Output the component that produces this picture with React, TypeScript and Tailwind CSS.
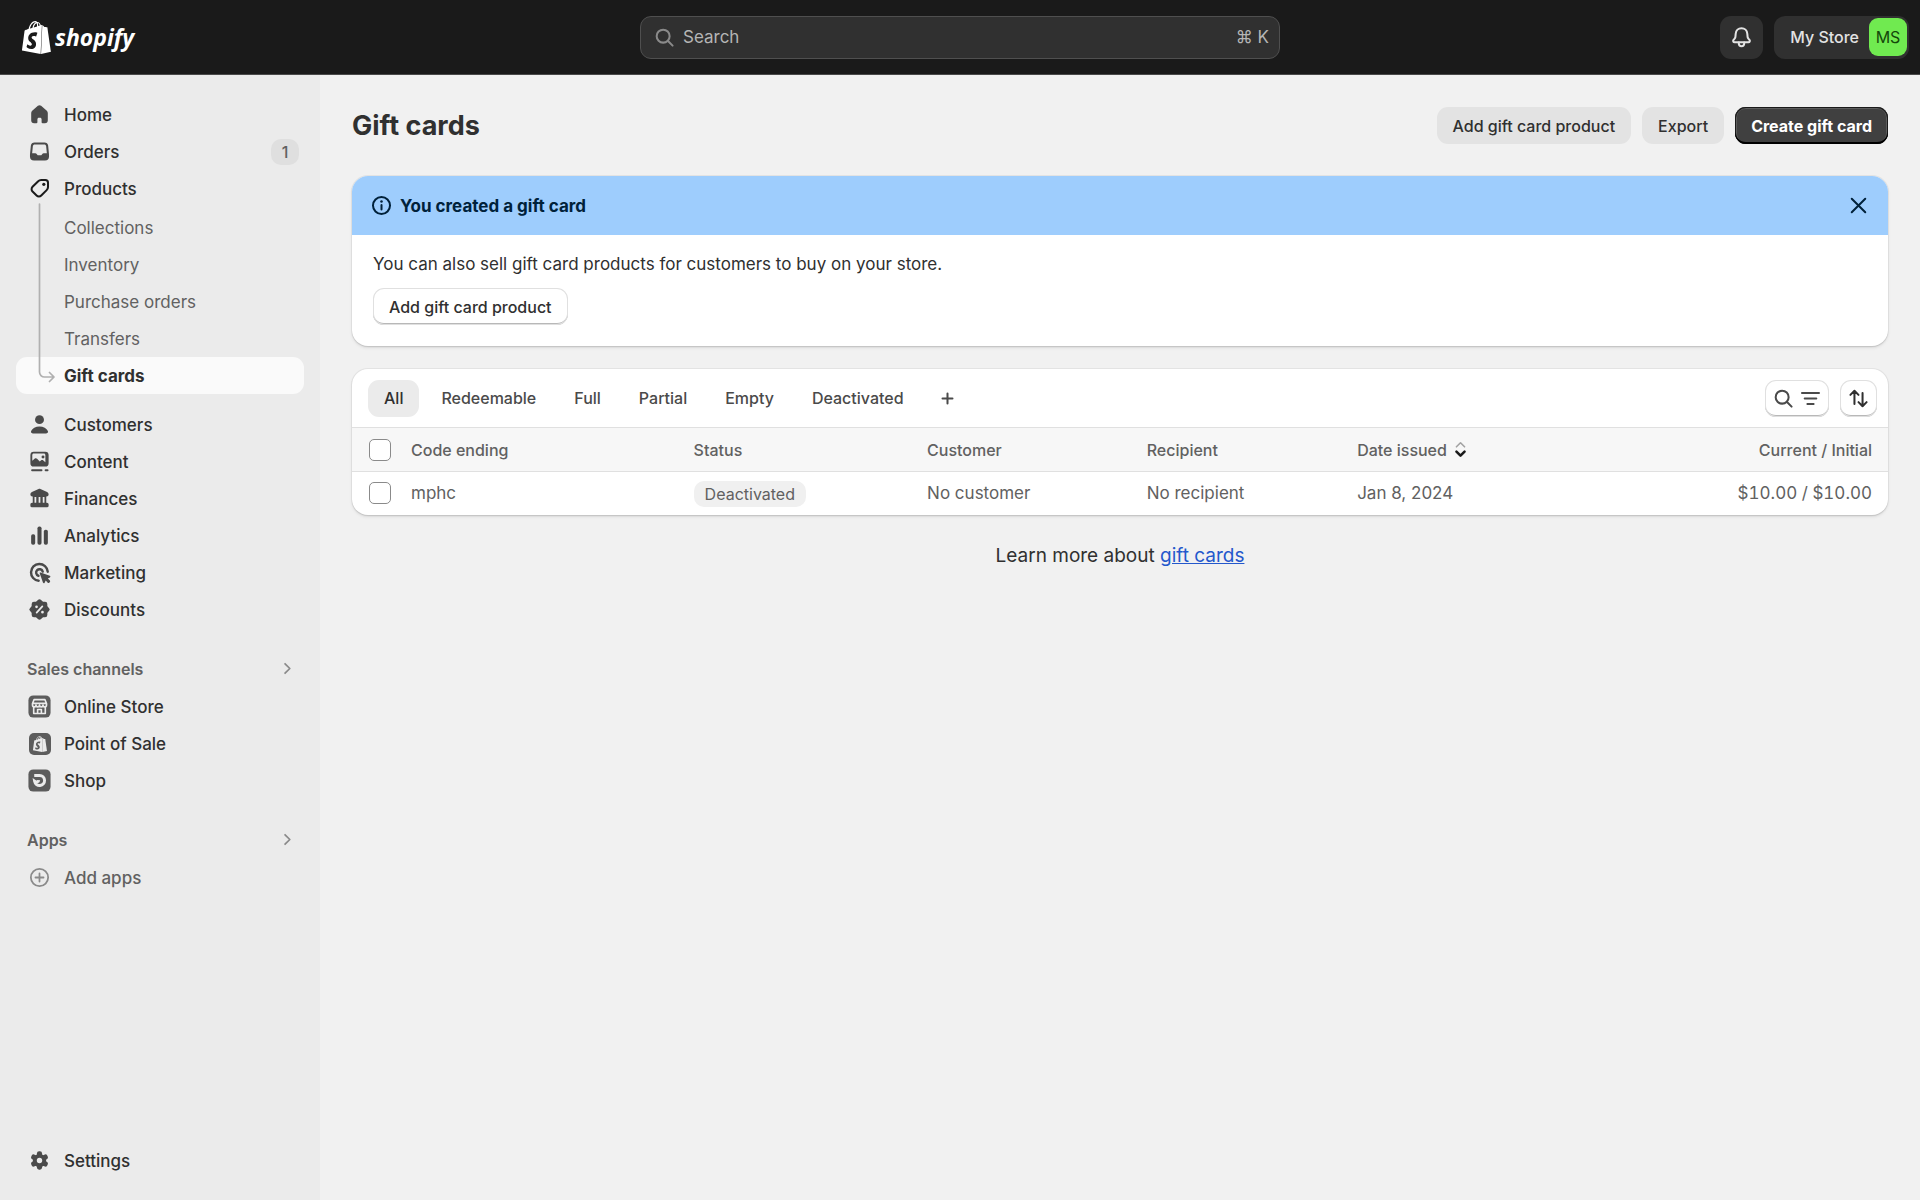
import * as React from 'react';
import { SiShopify } from 'react-icons/si';

type IconProps = { className?: string };

const Svg: React.FC<React.PropsWithChildren<IconProps>> = ({ className = '', children }) => (
  <svg viewBox="0 0 20 20" fill="currentColor" aria-hidden="true" className={`size-[27px] shrink-0 ${className}`}>
    {children}
  </svg>
);

const stroke = {
  fill: 'none',
  stroke: 'currentColor',
  strokeWidth: 1.5,
  strokeLinecap: 'round',
  strokeLinejoin: 'round',
} as const;

const HomeIcon = () => (
  <Svg>
    <path d="M8.8 3.6a1.8 1.8 0 0 1 2.4 0l4 3.5c.6.5.95 1.2.95 2v5.2a2.2 2.2 0 0 1-2.2 2.2h-1.6a.8.8 0 0 1-.8-.8v-2.2c0-.6-.5-1.1-1.1-1.1h-.9c-.6 0-1.1.5-1.1 1.1v2.2a.8.8 0 0 1-.8.8h-1.6a2.2 2.2 0 0 1-2.2-2.2v-5.2c0-.8.35-1.5.95-2z" />
  </Svg>
);

const OrdersIcon = () => (
  <Svg>
    <path
      fillRule="evenodd"
      d="M6.3 3.25h7.4a2.75 2.75 0 0 1 2.7 2.3l.6 6.2c.05.3.05.6.05.9v1.1a3 3 0 0 1-3 3h-8.1a3 3 0 0 1-3-3v-1.1c0-.3 0-.6.05-.9l.6-6.2a2.75 2.75 0 0 1 2.7-2.3zm.1 1.5c-.65 0-1.2.45-1.3 1.1l-.55 5.4h2.3c.5 0 .95.3 1.2.7l.3.5c.15.3.45.4.7.4h1.9c.3 0 .55-.15.7-.4l.3-.5c.25-.4.7-.7 1.2-.7h2.3l-.55-5.4c-.1-.65-.65-1.1-1.3-1.1z"
    />
  </Svg>
);

const ProductsIcon = () => (
  <Svg className="text-[#1a1a1a]">
    <path
      {...stroke}
      d="M11.2 3.7h3.1c1.1 0 2 .9 2 2v3.1c0 .9-.35 1.75-1 2.4l-4 4c-.95.95-2.5.95-3.45 0l-3-3c-.95-.95-.95-2.5 0-3.45l4-4c.65-.65 1.5-1.05 2.35-1.05z"
    />
    <circle cx="13.2" cy="6.9" r="1.2" />
  </Svg>
);

const CustomersIcon = () => (
  <Svg>
    <circle cx="10" cy="6.4" r="3.3" />
    <path d="M3.8 14.9c.9-2.2 3.3-3.5 6.2-3.5s5.3 1.3 6.2 3.5c.4 1-.3 1.7-1.2 1.7h-10c-.9 0-1.6-.7-1.2-1.7z" />
  </Svg>
);

const ContentIcon = () => (
  <Svg>
    <path
      fillRule="evenodd"
      d="M5.75 2.75h8.5a2.5 2.5 0 0 1 2.5 2.5v6a2.5 2.5 0 0 1-2.5 2.5h-8.5a2.5 2.5 0 0 1-2.5-2.5v-6a2.5 2.5 0 0 1 2.5-2.5zm0 1.4c-.6 0-1.1.5-1.1 1.1v4.2l1.9-1.6c.5-.4 1.2-.4 1.65.1l2 2.1 1-.9c.5-.4 1.2-.4 1.65.05l1.5 1.3v-5.25c0-.6-.5-1.1-1.1-1.1zM12.6 5.5a1.1 1.1 0 1 1 0 2.2a1.1 1.1 0 0 1 0-2.2z"
    />
    <path {...stroke} strokeWidth={1.4} d="M4.5 16.5h7M14.5 16.5h1.5" />
  </Svg>
);

const FinancesIcon = () => (
  <Svg>
    <path
      fillRule="evenodd"
      d="M9.3 2.95c.45-.2.95-.2 1.4 0l4.9 2.3c.7.35 1.15 1 1.15 1.75 0 .85-.7 1.5-1.5 1.5h-.25v4.6h.5c.7 0 1.25.55 1.25 1.25v1.15c0 .5-.4.9-.9.9h-11.7c-.5 0-.9-.4-.9-.9v-1.15c0-.7.55-1.25 1.25-1.25h.5v-4.6h-.25c-.8 0-1.5-.65-1.5-1.5 0-.75.45-1.4 1.15-1.75zM6.3 8.9v4.2h1.3v-4.2zM9.35 8.9v4.2h1.3v-4.2zM12.4 8.9v4.2h1.3v-4.2z"
    />
  </Svg>
);

const AnalyticsIcon = () => (
  <Svg>
    <rect x="3.8" y="9" width="3" height="7.8" rx="1.3" />
    <rect x="8.5" y="3.4" width="3" height="13.4" rx="1.3" />
    <rect x="13.2" y="5.8" width="3" height="11" rx="1.3" />
  </Svg>
);

const MarketingIcon = () => (
  <Svg>
    <path {...stroke} strokeWidth={1.8} d="M16.1 9.4a6.2 6.2 0 1 0-6.7 6.7" />
    <path {...stroke} strokeWidth={1.8} d="M12.4 9.3a2.5 2.5 0 1 0-3.2 3.1" />
    <path d="M10.8 10l6.8 2.4c.6.2.6 1 .1 1.25l-1.5.75 1.5 1.5c.3.3.3.8 0 1.1l-.5.5c-.3.3-.8.3-1.1 0l-1.5-1.5-.8 1.5c-.25.55-1 .5-1.25-.1l-2.4-6.8c-.15-.4.25-.8.65-.6z" />
  </Svg>
);

const DiscountsIcon = () => (
  <Svg>
    <rect x="4.2" y="4.2" width="11.6" height="11.6" rx="1.7" />
    <rect x="4.2" y="4.2" width="11.6" height="11.6" rx="1.7" transform="rotate(45 10 10)" />
    <g fill="#ebebeb" stroke="#ebebeb">
      <path d="M7.900 12.300l4.200-4.600" strokeWidth="1.3" strokeLinecap="round" />
      <circle cx="7.8" cy="8" r="0.5" />
      <circle cx="12.2" cy="12" r="0.5" />
    </g>
  </Svg>
);

const StoreChannelIcon = () => (
  <Svg className="text-[#5c5c5c]">
    <rect x="1.8" y="1.8" width="16.4" height="16.4" rx="3.6" />
    <g fill="none" stroke="#ebebeb" strokeWidth="1.2" strokeLinejoin="round">
      <path d="M6 4.9h8l1.2 2.9v1.1c0 .8-.6 1.4-1.3 1.4s-1.3-.6-1.3-1.4c0 .8-.6 1.4-1.3 1.4s-1.3-.6-1.3-1.4c0 .8-.6 1.4-1.3 1.4s-1.3-.6-1.3-1.4c0 .8-.6 1.4-1.3 1.4s-1.3-.6-1.3-1.4v-1.1zM4.8 7.7h10.4" />
      <path d="M5.7 10.3v4.9h8.6v-4.9M8.6 15v-2.8h2.8v2.8" />
    </g>
  </Svg>
);

const PosChannelIcon = () => (
  <span className="grid size-[27px] shrink-0 place-items-center">
    <span className="grid size-[22px] place-items-center rounded-[5px] bg-[#5c5c5c]">
      <SiShopify className="size-4 text-[#ebebeb]" aria-hidden="true" />
    </span>
  </span>
);

const ShopChannelIcon = () => (
  <Svg className="text-[#5c5c5c]">
    <rect x="1.8" y="1.8" width="16.4" height="16.4" rx="3.6" />
    <path d="M6.1 6.3h4a3.7 3.7 0 1 1-3.7 4.3c1.3.9 2.9.5 3-.8" fill="none" stroke="#ebebeb" strokeWidth="2.2" />
  </Svg>
);

const PlusCircleIcon = () => (
  <Svg className="text-[#8a8a8a]">
    <g {...stroke} strokeWidth={1.3}>
      <circle cx="10" cy="10" r="6.4" />
      <path d="M10 7v6M7 10h6" />
    </g>
  </Svg>
);

const SettingsIcon = () => (
  <Svg>
    <circle cx="10" cy="10" r="4.9" />
    <rect x="8.1" y="3.2" width="3.8" height="13.6" rx="1.6" />
    <rect x="8.1" y="3.2" width="3.8" height="13.6" rx="1.6" transform="rotate(60 10 10)" />
    <rect x="8.1" y="3.2" width="3.8" height="13.6" rx="1.6" transform="rotate(120 10 10)" />
    <circle cx="10" cy="10" r="2" fill="#ebebeb" />
  </Svg>
);

const SearchIcon = ({ className }: IconProps) => (
  <Svg className={className}>
    <g {...stroke}>
      <circle cx="9" cy="9" r="4.8" />
      <path d="M12.6 12.6l3.4 3.4" />
    </g>
  </Svg>
);

const BellIcon = () => (
  <Svg className="text-[#e3e3e3]">
    <g {...stroke}>
      <path d="M10 3.2c-2.4 0-4.1 1.7-4.3 4l-.2 2.2c0 .5-.3 1-.6 1.4l-.8 1c-.6.8-.2 1.7.8 1.7h10.2c1 0 1.4-.9.8-1.7l-.8-1c-.3-.4-.6-.9-.6-1.4l-.2-2.2c-.2-2.3-1.9-4-4.3-4z" />
      <path d="M8 13.7v.8a2 2 0 0 0 4 0v-.8" />
    </g>
  </Svg>
);

const ChevronIcon = () => (
  <Svg className="text-[#8a8a8a]">
    <path {...stroke} strokeWidth={1.3} d="M8.2 6.5l3.5 3.5-3.5 3.5" />
  </Svg>
);

const InfoIcon = () => (
  <Svg>
    <circle {...stroke} cx="10" cy="10" r="6.3" />
    <path {...stroke} d="M10 9.6v3.4" />
    <circle cx="10" cy="7" r="0.95" />
  </Svg>
);

const CloseIcon = () => (
  <Svg>
    <path {...stroke} d="M5 5l10 10M15 5l-10 10" />
  </Svg>
);

const PlusIcon = () => (
  <Svg>
    <path {...stroke} d="M10 6.3v7.4M6.3 10h7.4" />
  </Svg>
);

const FilterIcon = () => (
  <Svg>
    <path {...stroke} d="M3.7 6h12.6M5.7 10h8.6M7.7 14h4.6" />
  </Svg>
);

const SortIcon = () => (
  <Svg className="text-[#303030]">
    <path {...stroke} d="M7 14v-9.7M4 7.3l3-3 3 3M13 6v9.7M10 12.7l3 3 3-3" />
  </Svg>
);

const SortToggleIcon = () => (
  <Svg>
    <path {...stroke} stroke="#a3a3a3" strokeWidth={1.2} d="M7 8l3-3 3 3" />
    <path {...stroke} stroke="#1a1a1a" strokeWidth={1.9} d="M7 11.6l3 3 3-3" />
  </Svg>
);

const NavItem: React.FC<{ icon: React.ReactNode; label: string; badge?: string; muted?: boolean }> = ({
  icon,
  label,
  badge,
  muted,
}) => (
  <li>
    <a
      href="#"
      className={`flex h-[37px] items-center gap-[11px] rounded-[11px] pr-[5px] pl-[10px] font-[550] ${
        muted ? 'text-[#616161]' : 'text-[#303030]'
      }`}
    >
      <span className={muted ? '' : 'text-[#4a4a4a]'}>{icon}</span>
      <span className="grow">{label}</span>
      {badge && (
        <span className="grid h-[26px] w-7 place-items-center rounded-[10px] bg-[#dfdfdf] text-base text-[#616161]">
          {badge}
        </span>
      )}
    </a>
  </li>
);

const SectionHeading: React.FC<{ label: string }> = ({ label }) => (
  <button
    type="button"
    className="flex h-[37px] w-full items-center justify-between pr-[3px] pl-[11px] text-base font-semibold text-[#616161]"
  >
    {label}
    <ChevronIcon />
  </button>
);

const PRODUCT_LINKS = ['Collections', 'Inventory', 'Purchase orders', 'Transfers'];

const Sidebar = () => (
  <nav className="flex w-80 shrink-0 flex-col bg-[#ebebeb] px-4 pt-[21px] pb-[21px]">
    <ul>
      <NavItem icon={<HomeIcon />} label="Home" />
      <NavItem icon={<OrdersIcon />} label="Orders" badge="1" />
      <NavItem icon={<ProductsIcon />} label="Products" />
    </ul>
    <ul className="relative pt-0.5">
      {PRODUCT_LINKS.map((label) => (
        <li key={label}>
          <a href="#" className="flex h-[37px] items-center pl-12 text-[#616161]">
            {label}
          </a>
        </li>
      ))}
      <li>
        <a
          href="#"
          aria-current="page"
          className="flex h-[37px] items-center rounded-[11px] bg-[#fafafa] pl-12 font-[650] text-[#303030]"
        >
          Gift cards
        </a>
      </li>
      <svg
        viewBox="0 0 18 180"
        fill="none"
        stroke="#b0b0b0"
        strokeWidth="1.7"
        strokeLinecap="round"
        strokeLinejoin="round"
        aria-hidden="true"
        className="absolute -top-1 left-[22px] h-[180px] w-[18px]"
      >
        <path d="M1.5 1v168a5 5 0 0 0 5 5h9M11.5 169.5l4.5 4.5-4.5 4.5" />
      </svg>
    </ul>
    <ul className="pt-3">
      <NavItem icon={<CustomersIcon />} label="Customers" />
      <NavItem icon={<ContentIcon />} label="Content" />
      <NavItem icon={<FinancesIcon />} label="Finances" />
      <NavItem icon={<AnalyticsIcon />} label="Analytics" />
      <NavItem icon={<MarketingIcon />} label="Marketing" />
      <NavItem icon={<DiscountsIcon />} label="Discounts" />
    </ul>
    <div className="pt-[22px]">
      <SectionHeading label="Sales channels" />
      <ul className="pt-px">
        <NavItem icon={<StoreChannelIcon />} label="Online Store" />
        <NavItem icon={<PosChannelIcon />} label="Point of Sale" />
        <NavItem icon={<ShopChannelIcon />} label="Shop" />
      </ul>
    </div>
    <div className="pt-[22px]">
      <SectionHeading label="Apps" />
      <ul className="pt-px">
        <NavItem icon={<PlusCircleIcon />} label="Add apps" muted />
      </ul>
    </div>
    <ul className="mt-auto">
      <NavItem icon={<SettingsIcon />} label="Settings" />
    </ul>
  </nav>
);

const TopBar = () => (
  <header className="grid h-[75px] shrink-0 grid-cols-3 items-center border-b border-[#4a4a4a] bg-[#1a1a1a]">
    <a href="#" aria-label="Shopify" className="flex items-center gap-0.5 pl-5 text-white">
      <SiShopify className="size-[33px]" aria-hidden="true" />
      <span className="font-['Open_Sans',sans-serif] text-[23px] leading-8 font-bold italic">shopify</span>
    </a>
    <label className="flex h-[43px] items-center gap-[5px] rounded-[11px] border border-[#4f4f4f] bg-[#303030] px-[10px] text-[#b5b5b5]">
      <SearchIcon className="text-[#8a8a8a]" />
      <input
        type="search"
        aria-label="Search"
        placeholder="Search"
        className="min-w-0 grow bg-transparent outline-none placeholder:text-[#b5b5b5]"
      />
      <span>⌘ K</span>
    </label>
    <div className="flex items-center justify-end gap-[11px] pr-[11px]">
      <button
        type="button"
        aria-label="Notifications"
        className="grid size-[43px] place-items-center rounded-[11px] bg-[#303030]"
      >
        <BellIcon />
      </button>
      <button
        type="button"
        className="flex h-[43px] items-center gap-[10px] rounded-[11px] bg-[#303030] pr-0.5 pl-4 text-base font-[550] text-[#e3e3e3]"
      >
        My Store
        <span className="grid size-[38px] place-items-center rounded-[9px] bg-[#70ea50] font-normal text-[#14470a]">
          MS
        </span>
      </button>
    </div>
  </header>
);

const outlineButton =
  'rounded-[11px] bg-white shadow-[inset_0_0_0_1px_#e0e0e0,inset_0_-2px_0_#b8b8b8]';

const cardShadow = 'shadow-[0_1px_1px_#c4c4c4,0_2px_3px_#dcdcdc,0_0_0_1px_#e3e3e3]';

const GiftCardBanner = () => (
  <section className={`overflow-hidden rounded-2xl bg-white ${cardShadow}`}>
    <div className="flex h-[59px] items-center gap-[5px] bg-[#9ecdfd] px-4 text-[#00213a]">
      <InfoIcon />
      <h2 className="grow font-[650]">You created a gift card</h2>
      <button type="button" aria-label="Dismiss">
        <CloseIcon />
      </button>
    </div>
    <div className="px-[21px] pt-[15px] pb-[21px]">
      <p>You can also sell gift card products for customers to buy on your store.</p>
      <button type="button" className={`mt-[10px] h-[37px] px-4 text-base font-[550] ${outlineButton}`}>
        Add gift card product
      </button>
    </div>
  </section>
);

const TABS = ['All', 'Redeemable', 'Full', 'Partial', 'Empty', 'Deactivated'];

const GIFT_CARDS = [
  {
    code: 'mphc',
    status: 'Deactivated',
    customer: 'No customer',
    recipient: 'No recipient',
    issued: 'Jan 8, 2024',
    amount: '$10.00 / $10.00',
  },
];

const Checkbox: React.FC<{ label: string }> = ({ label }) => (
  <input
    type="checkbox"
    aria-label={label}
    className="block size-[22px] appearance-none rounded-[5px] border border-[#8a8a8a] bg-white checked:bg-[#303030]"
  />
);

const GiftCardTable = () => (
  <section className={`mt-[23px] overflow-hidden rounded-2xl bg-white ${cardShadow}`}>
    <div className="flex h-[58px] items-center justify-between pr-[11px] pl-4">
      <div className="flex gap-1.5 text-base font-[550] text-[#4a4a4a]">
        {TABS.map((tab, i) => (
          <button
            key={tab}
            type="button"
            className={`h-[37px] rounded-[11px] px-4 ${i === 0 ? 'bg-[#ebebeb] text-[#303030]' : ''}`}
          >
            {tab}
          </button>
        ))}
        <button type="button" aria-label="Create new view" className="px-2">
          <PlusIcon />
        </button>
      </div>
      <div className="flex gap-[11px] text-[#4a4a4a]">
        <button
          type="button"
          aria-label="Search and filter results"
          className={`flex h-[37px] items-center px-[5px] ${outlineButton}`}
        >
          <SearchIcon />
          <FilterIcon />
        </button>
        <button
          type="button"
          aria-label="Sort the results"
          className={`grid size-[37px] place-items-center ${outlineButton}`}
        >
          <SortIcon />
        </button>
      </div>
    </div>
    <table className="w-full table-fixed text-left text-[#616161]">
      <thead>
        <tr className="h-11 border-y border-[#e0e0e0] bg-[#f7f7f7] text-base">
          <th className="w-[51px] pl-[17px]">
            <Checkbox label="Select all gift cards" />
          </th>
          <th className="w-[18.4%] px-2 font-[550]">Code ending</th>
          <th className="w-[15.2%] px-2 font-[550]">Status</th>
          <th className="w-[14.3%] px-2 font-[550]">Customer</th>
          <th className="w-[13.7%] px-2 font-[550]">Recipient</th>
          <th className="px-2 font-[550]">
            <button type="button" className="flex items-center">
              Date issued
              <SortToggleIcon />
            </button>
          </th>
          <th className="pr-4 text-right font-[550]">Current / Initial</th>
        </tr>
      </thead>
      <tbody>
        {GIFT_CARDS.map((card) => (
          <tr key={card.code} className="h-[43px]">
            <td className="pl-[17px]">
              <Checkbox label={`Select ${card.code}`} />
            </td>
            <td className="px-2">{card.code}</td>
            <td className="px-2">
              <span className="inline-flex h-[26px] items-center rounded-[10px] bg-[#f0f0f0] px-[11px] align-middle text-base">
                {card.status}
              </span>
            </td>
            <td className="px-2">{card.customer}</td>
            <td className="px-2">{card.recipient}</td>
            <td className="px-2">{card.issued}</td>
            <td className="pr-4 text-right tabular-nums">{card.amount}</td>
          </tr>
        ))}
      </tbody>
    </table>
  </section>
);

const App: React.FC = () => (
  <div className="flex min-h-screen flex-col bg-[#f1f1f1] font-[Inter,sans-serif] text-[17px] leading-7 text-[#303030]">
    <TopBar />
    <div className="flex grow">
      <Sidebar />
      <main className="min-w-0 grow px-8 pt-8">
        <div className="flex items-center justify-between pb-8">
          <h1 className="text-[27px] leading-8 font-bold">Gift cards</h1>
          <div className="flex gap-[11px] text-base font-[550]">
            <button type="button" className="h-[37px] rounded-[11px] bg-[#e3e3e3] px-4">
              Add gift card product
            </button>
            <button type="button" className="h-[37px] rounded-[11px] bg-[#e3e3e3] px-4">
              Export
            </button>
            <button
              type="button"
              className="h-[37px] rounded-[11px] bg-[#404040] px-4 font-[650] text-white shadow-[inset_0_-2px_0_#000,inset_0_0_0_1px_#1a1a1a,inset_0_2px_0_#5c5c5c,inset_2px_0_0_#5c5c5c,inset_-2px_0_0_#5c5c5c]"
            >
              Create gift card
            </button>
          </div>
        </div>
        <GiftCardBanner />
        <GiftCardTable />
        <p className="pt-[27px] text-center text-[19px]">
          Learn more about{' '}
          <a href="#" className="text-[#2458cc] underline">
            gift cards
          </a>
        </p>
      </main>
    </div>
  </div>
);

export default App;
